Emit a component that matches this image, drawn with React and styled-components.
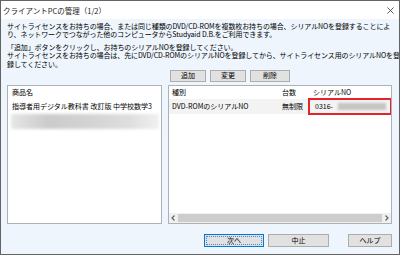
import React from 'react'
import styled, { createGlobalStyle } from 'styled-components'

const GlobalStyle = createGlobalStyle`
  html, body {
    margin: 0;
    padding: 0;
    background: #ffffff;
  }
  body {
    font-family: "Noto Sans CJK JP", "Noto Sans", sans-serif;
    color: #000;
  }
`

const Window = styled.div`
  width: 400px;
  height: 255px;
  box-sizing: border-box;
  border: 1px solid #646464;
  display: flex;
  flex-direction: column;
  overflow: hidden;
`

const TitleBar = styled.div`
  height: 18px;
  flex: none;
  background: #ffffff;
  display: flex;
  align-items: center;
  justify-content: space-between;
  padding: 1px 5px 0 2px;
  box-sizing: border-box;
`

const Title = styled.span`
  font-size: 7.5px;
  line-height: 10px;
  color: #1a1a1a;
`

const Body = styled.div`
  flex: 1;
  background: #eef5fc;
  padding: 3px 7px 0 6px;
  display: flex;
  flex-direction: column;
  font-size: 7px;
`

const Intro = styled.p`
  margin: ${p => (p.$gap ? '4.4px 0 0 0' : '0')};
  line-height: 8.3px;
  letter-spacing: -0.1px;
  white-space: nowrap;
`

const Panels = styled.div`
  margin-top: 2px;
  display: grid;
  grid-template-columns: 155px 1fr;
  grid-template-rows: 12px 139px;
  column-gap: 6px;
  row-gap: 3px;
`

const Toolbar = styled.div`
  grid-column: 2;
  grid-row: 1;
  display: flex;
  gap: 4px;
  padding-left: 2px;
`

const Button = styled.button`
  width: ${p => p.$w}px;
  height: ${p => p.$h || 12}px;
  margin-left: ${p => p.$ml || 0}px;
  padding: 0;
  box-sizing: border-box;
  background: #e1e1e1;
  border: 1px solid ${p => (p.$default ? '#0078d7' : '#adadad')};
  font-family: inherit;
  font-size: 7px;
  line-height: 1;
  color: #000;
  position: relative;
  &::after {
    content: '';
    display: ${p => (p.$default ? 'block' : 'none')};
    position: absolute;
    inset: 1px;
    border: 1px dotted #4a86c8;
  }
`

const ListBox = styled.div`
  grid-row: 2;
  grid-column: ${p => p.$col};
  background: #ffffff;
  border: 1px solid #adb2ba;
  display: flex;
  flex-direction: column;
  overflow: hidden;
`

const ListContent = styled.div`
  flex: 1;
`

const Row = styled.div`
  display: grid;
  grid-template-columns: ${p => p.$cols};
  height: ${p => p.$h}px;
  align-items: center;
  background: ${p => p.$bg || 'transparent'};
`

const Cell = styled.div`
  padding-left: ${p => p.$pl || 3}px;
  white-space: nowrap;
  overflow: ${p => (p.$marked ? 'visible' : 'hidden')};
  height: 100%;
  display: flex;
  align-items: center;
  outline: ${p => (p.$marked ? '2px solid #e3242b' : 'none')};
  outline-offset: -1px;
`

const Blurred = styled.div`
  margin: 1px 2px 0 3px;
  height: 15px;
  background: linear-gradient(90deg, #e6e6e6 0%, #cbcbcb 25%, #d4d4d4 55%, #dedede 80%, #f0f0f0 100%);
  filter: blur(1.5px);
`

const SerialBlur = styled.span`
  display: inline-block;
  width: 48px;
  height: 7px;
  margin-left: 5px;
  background: #c6c6c6;
  filter: blur(1px);
`

const ScrollBar = styled.div`
  height: 10px;
  flex: none;
  display: flex;
  align-items: stretch;
  background: #f0f0f0;
`

const Arrow = styled.div`
  width: 9px;
  display: flex;
  align-items: center;
  justify-content: center;
`

const Thumb = styled.div`
  flex: 1;
  margin: 1px 0;
  background: #cdcdcd;
`

const Footer = styled.div`
  margin-top: 10px;
  display: flex;
  justify-content: flex-end;
  gap: 4px;
`

const Chevron = ({ dir }) => (
  <svg width="5" height="6" viewBox="0 0 5 6">
    <path
      d={dir === 'left' ? 'M3.5 0.5 L1 3 L3.5 5.5' : 'M1.5 0.5 L4 3 L1.5 5.5'}
      fill="none"
      stroke="#606060"
      strokeWidth="1.2"
    />
  </svg>
)

const CloseIcon = () => (
  <svg width="7" height="7" viewBox="0 0 7 7">
    <path d="M0.5 0.5 L6.5 6.5 M6.5 0.5 L0.5 6.5" stroke="#333" strokeWidth="0.8" />
  </svg>
)

const rightCols = '110px 30px 1fr'

export default function App() {
  return (
    <>
      <GlobalStyle />
      <Window>
        <TitleBar>
          <Title>クライアントPCの管理（1/2）</Title>
          <CloseIcon />
        </TitleBar>
        <Body>
          <Intro>
            サイトライセンスをお持ちの場合、または同じ種類のDVD/CD-ROMを複数枚お持ちの場合、シリアルNOを登録することによ
            <br />
            り、ネットワークでつながった他のコンピュータからStudyaid D.B.をご利用できます。
          </Intro>
          <Intro $gap>
            「追加」ボタンをクリックし、お持ちのシリアルNOを登録してください。
            <br />
            サイトライセンスをお持ちの場合は、先にDVD/CD-ROMのシリアルNOを登録してから、サイトライセンス用のシリアルNOを登
            <br />
            録してください。
          </Intro>
          <Panels>
            <Toolbar>
              <Button $w={36}>追加</Button>
              <Button $w={36}>変更</Button>
              <Button $w={40}>削除</Button>
            </Toolbar>
            <ListBox $col={1}>
              <ListContent>
                <Row $cols="1fr" $h={13}>
                  <Cell $pl={4}>商品名</Cell>
                </Row>
                <Row $cols="1fr" $h={14}>
                  <Cell $pl={4}>指導者用デジタル教科書 改訂版 中学校数学3</Cell>
                </Row>
                <Blurred />
              </ListContent>
            </ListBox>
            <ListBox $col={2}>
              <ListContent>
                <Row $cols={rightCols} $h={13}>
                  <Cell>種別</Cell>
                  <Cell>台数</Cell>
                  <Cell $pl={4}>シリアルNO</Cell>
                </Row>
                <Row $cols={rightCols} $h={15} $bg="#f3f3f3">
                  <Cell>DVD-ROMのシリアルNO</Cell>
                  <Cell>無制限</Cell>
                  <Cell $pl={6} $marked>
                    0316-
                    <SerialBlur />
                  </Cell>
                </Row>
              </ListContent>
              <ScrollBar>
                <Arrow>
                  <Chevron dir="left" />
                </Arrow>
                <Thumb />
                <Arrow>
                  <Chevron dir="right" />
                </Arrow>
              </ScrollBar>
            </ListBox>
          </Panels>
          <Footer>
            <Button $w={60} $h={13} $default>
              次へ
            </Button>
            <Button $w={61} $h={13}>
              中止
            </Button>
            <Button $w={44} $h={13} $ml={15}>
              ヘルプ
            </Button>
          </Footer>
        </Body>
      </Window>
    </>
  )
}
